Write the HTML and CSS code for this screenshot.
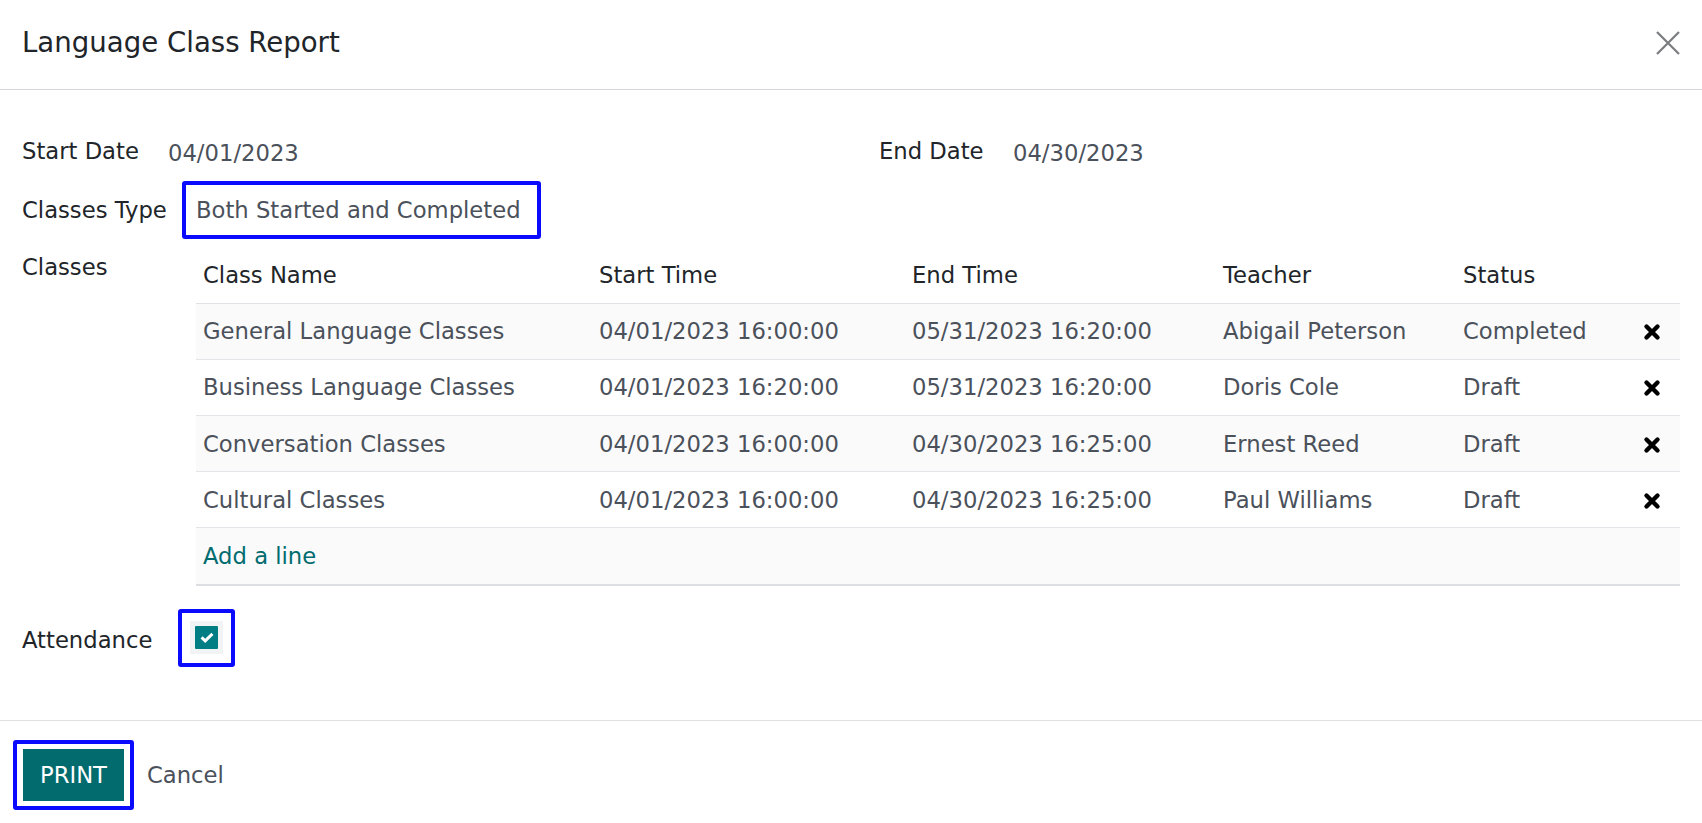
FILE: index.html
```html
<!DOCTYPE html>
<html lang="en">
<head>
    <meta charset="UTF-8">
    <meta name="viewport" content="width=device-width, initial-scale=1.0">
    <title>Language Class Report</title>
    <link rel="stylesheet" href="styles.css">
</head>
<body>

    <div class="modal">
        <header class="modal-header">
            <h4 class="modal-title">Language Class Report</h4>
            <button class="btn-close" aria-label="Close">
                <svg width="24" height="24" viewBox="0 0 24 24">
                    <path d="M1 1 L23 23 M23 1 L1 23" stroke="#7a7c80" stroke-width="2.2" fill="none"/>
                </svg>
            </button>
        </header>

        <main class="modal-body">
            <div class="dates">
                <div class="field">
                    <label class="label">Start Date</label>
                    <span class="value">04/01/2023</span>
                </div>
                <div class="field">
                    <label class="label label-end">End Date</label>
                    <span class="value">04/30/2023</span>
                </div>
            </div>

            <div class="field field-type">
                <label class="label">Classes Type</label>
                <span class="highlight select">Both Started and Completed</span>
            </div>

            <div class="field field-classes">
                <label class="label">Classes</label>
                <table class="lines">
                    <colgroup>
                        <col style="width: 396px">
                        <col style="width: 313px">
                        <col style="width: 311px">
                        <col style="width: 240px">
                        <col style="width: 166px">
                        <col style="width: 58px">
                    </colgroup>
                    <thead>
                        <tr>
                            <th>Class Name</th>
                            <th>Start Time</th>
                            <th>End Time</th>
                            <th>Teacher</th>
                            <th>Status</th>
                            <th></th>
                        </tr>
                    </thead>
                    <tbody id="rows"></tbody>
                    <tfoot>
                        <tr class="odd">
                            <td colspan="6"><a class="add-line" href="#">Add a line</a></td>
                        </tr>
                    </tfoot>
                </table>
            </div>

            <div class="field field-attendance">
                <label class="label">Attendance</label>
                <span class="highlight check-wrap">
                    <span class="check-bg">
                        <span class="checkbox">
                            <svg width="14" height="11" viewBox="0 0 14 11">
                                <path d="M1.6 5.4 L5.2 8.8 L12.4 1.8" stroke="#fff" stroke-width="3" fill="none"/>
                            </svg>
                        </span>
                    </span>
                </span>
            </div>
        </main>

        <footer class="modal-footer">
            <span class="highlight btn-wrap"><button class="btn-primary">PRINT</button></span>
            <button class="btn-cancel">Cancel</button>
        </footer>
    </div>

    <script>
        const rows = [
            ["General Language Classes", "04/01/2023 16:00:00", "05/31/2023 16:20:00", "Abigail Peterson", "Completed"],
            ["Business Language Classes", "04/01/2023 16:20:00", "05/31/2023 16:20:00", "Doris Cole", "Draft"],
            ["Conversation Classes", "04/01/2023 16:00:00", "04/30/2023 16:25:00", "Ernest Reed", "Draft"],
            ["Cultural Classes", "04/01/2023 16:00:00", "04/30/2023 16:25:00", "Paul Williams", "Draft"]
        ];

        const tbody = document.getElementById("rows");
        const icon = '<svg width="18" height="18" viewBox="0 0 18 18"><path d="M3.5 3.5 L14.5 14.5 M14.5 3.5 L3.5 14.5" stroke="#000" stroke-width="4.4" stroke-linecap="round" fill="none"/></svg>';

        rows.forEach((r, i) => {
            let tr = document.createElement("tr");
            if (i % 2 === 0) tr.className = "odd";
            r.forEach(text => {
                let td = document.createElement("td");
                td.textContent = text;
                tr.appendChild(td);
            });
            let del = document.createElement("td");
            del.className = "delete";
            del.innerHTML = icon;
            tr.appendChild(del);
            tbody.appendChild(tr);
        });
    </script>

</body>
</html>
```

FILE: styles.css
```css
body {
    margin: 0;
    font-family: "DejaVu Sans", Arial, sans-serif;
    font-size: 22.7px;
    line-height: 1.5;
    color: #212529;
    background: #fff;
}
.modal {
    width: 1702px;
    height: 823px;
    overflow: hidden;
}
.modal-header {
    height: 90px;
    box-sizing: border-box;
    padding: 0 22px 4px 22px;
    display: flex;
    align-items: center;
    justify-content: space-between;
    border-bottom: 1px solid #d5d6dc;
}
.modal-title {
    margin: 0;
    font-size: 27.6px;
    font-weight: normal;
    line-height: 1.2;
    color: #212529;
}
.btn-close {
    border: none;
    background: none;
    padding: 0;
    width: 24px;
    height: 24px;
    display: flex;
}
.modal-body {
    padding: 44px 22px 53px 22px;
    border-bottom: 1px solid #dfe0e2;
}
.dates {
    display: grid;
    grid-template-columns: 857px 1fr;
}
.field {
    display: flex;
    align-items: center;
}
.label {
    width: 146px;
    flex: none;
    color: #212529;
}
.label-end {
    width: 134px;
}
.value {
    color: #4b515b;
    position: relative;
    top: 2px;
}
.highlight {
    border: 4px solid #0a0aff;
    border-radius: 3px;
    display: inline-flex;
    align-items: center;
}
.field-type {
    margin-top: 13px;
}
.select {
    margin-left: 14px;
    padding: 8px 16px 8px 10px;
    color: #4b515b;
}
.field-classes {
    margin-top: 8px;
    align-items: flex-start;
}
.field-classes .label {
    margin-top: 3px;
}
.lines {
    margin-left: 28px;
    width: 1484px;
    border-collapse: collapse;
    table-layout: fixed;
}
.lines th {
    font-weight: normal;
    text-align: left;
    padding: 10.7px 7px;
    color: #212529;
    border-bottom: 1px solid #dfe1e5;
}
.lines td {
    padding: 10.6px 7px;
    color: #4b515b;
    border-bottom: 1px solid #e2e4e8;
    white-space: nowrap;
}
.lines tr.odd td {
    background: #fafafa;
}
.lines tfoot td {
    border-bottom: 2px solid #dcdee2;
}
.lines td.delete {
    padding: 0 0 0 2px;
    vertical-align: middle;
}
.lines td.delete svg {
    display: block;
    margin: 0 auto;
    position: relative;
    top: 1px;
}
.add-line {
    color: #016c70;
    text-decoration: none;
}
.field-attendance {
    margin-top: 23px;
}
.field-attendance .label {
    position: relative;
    top: 2px;
}
.check-wrap {
    margin-left: 10px;
    padding: 8.5px 8px;
}
.check-bg {
    width: 33px;
    height: 33px;
    background: #f2f3f5;
    display: flex;
    align-items: center;
    justify-content: center;
}
.checkbox {
    width: 23px;
    height: 23px;
    background: #017e84;
    border-radius: 1px;
    display: flex;
    align-items: center;
    justify-content: center;
}
.modal-footer {
    padding: 19px 13px;
    display: flex;
    align-items: center;
}
.btn-wrap {
    padding: 5.5px 6px;
}
.btn-primary {
    font-family: inherit;
    font-size: 22.7px;
    line-height: 1.5;
    background: #016b6e;
    color: #fff;
    border: none;
    padding: 8.7px 17px;
}
.btn-cancel {
    font-family: inherit;
    font-size: 22.7px;
    line-height: 1.5;
    background: none;
    border: none;
    color: #4b515b;
    padding: 0;
    margin-left: 13px;
}
```
